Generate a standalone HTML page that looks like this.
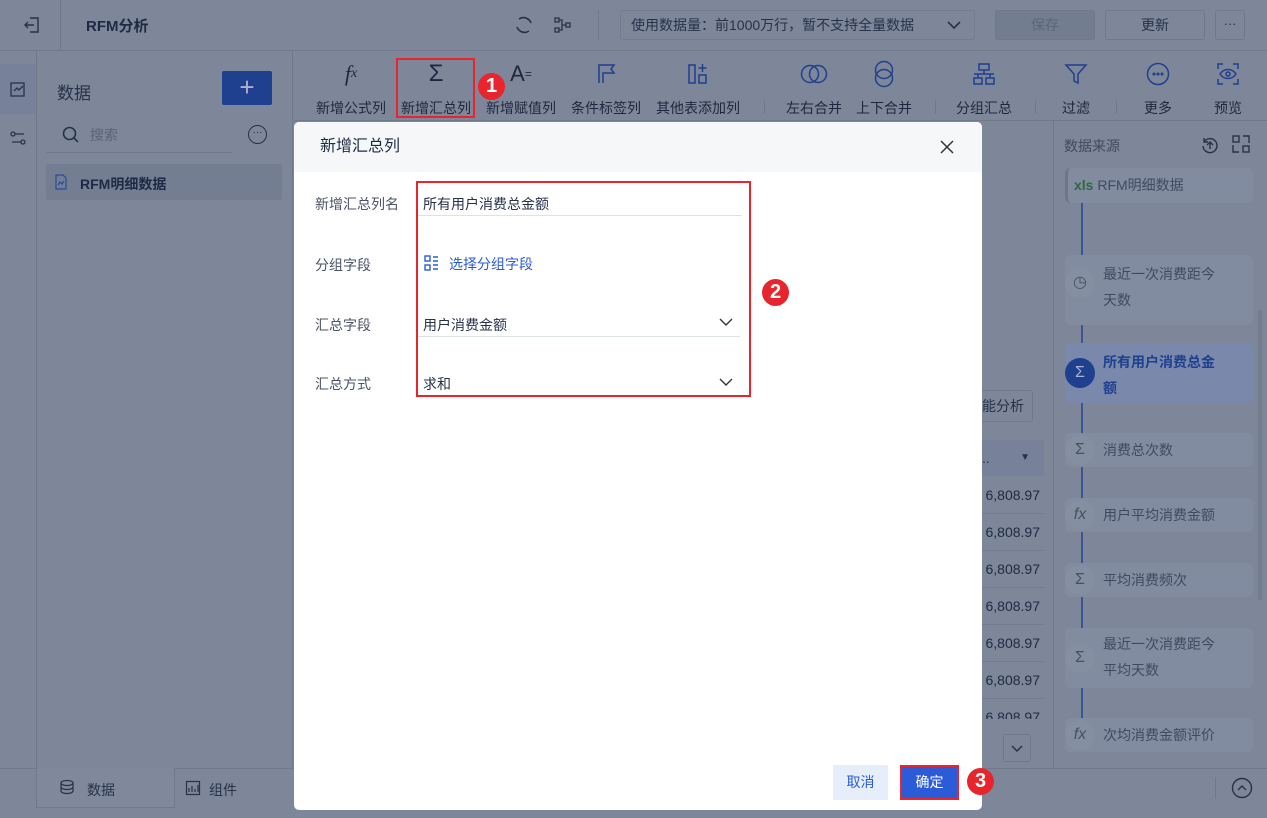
<!DOCTYPE html>
<html><head><meta charset="utf-8"><style>
*{box-sizing:border-box;margin:0;padding:0}
html,body{background:#7d8799}
body{width:1267px;height:818px;overflow:hidden;font-family:"Liberation Sans","Noto Sans CJK SC",sans-serif;position:relative;color:#1e2a44}
.a{position:absolute}
.t{font-size:14px;color:#26324a}
.ln{background:#6f798c}
.tb{position:absolute;top:60px;text-align:center;font-size:14px;color:#1d2840}
.ic{height:28px;margin-bottom:10px;display:flex;justify-content:center;align-items:center;color:#1f3f8f}
.card{position:absolute;left:1065px;width:188px;background:#828ca0;border-radius:6px;font-size:14px;color:#3f4a60}
.circ{position:absolute;left:1065px;width:30px;height:30px;border-radius:50%;background:#858fa2;text-align:center;line-height:30px;color:#465066;font-size:16px}
.row{position:absolute;left:982px;width:62px;height:37px;border-bottom:1px solid #737d90;font-size:14px;color:#1e2a44;line-height:37px;text-align:right;padding-right:4px}
.red{position:absolute;width:27px;height:27px;border-radius:50%;background:#e8242c;color:#fff;font-size:20px;font-weight:bold;text-align:center;line-height:27px}
</style></head><body>
<div class="a ln" style="left:0;top:50px;width:1267px;height:1px"></div>
<div class="a ln" style="left:60px;top:0;width:1px;height:50px"></div>
<svg class="a" style="left:22px;top:15px" width="20" height="20" viewBox="0 0 20 20" fill="none" stroke="#26324a" stroke-width="1.4"><path d="M8 3h8v14H8M3 10h9M6 7l-3 3 3 3"/></svg>
<div class="a" style="left:86px;top:15px;font-size:15px;font-weight:bold;color:#1e2a44">RFM分析</div>
<svg class="a" style="left:513px;top:14px" width="22" height="22" viewBox="0 0 22 22" fill="none" stroke="#26324a" stroke-width="1.6"><path d="M6 5a8 8 0 0 1 12 4M16 17A8 8 0 0 1 4 13"/></svg>
<svg class="a" style="left:553px;top:15px" width="20" height="20" viewBox="0 0 20 20" fill="none" stroke="#26324a" stroke-width="1.3"><rect x="2" y="3" width="4" height="4"/><rect x="2" y="13" width="4" height="4"/><rect x="13" y="8" width="4" height="4"/><path d="M6 5h3v10H6M9 10h4"/></svg>
<div class="a ln" style="left:598px;top:10px;width:1px;height:30px"></div>
<div class="a" style="left:620px;top:10px;width:355px;height:30px;border:1px solid #737d90;border-radius:3px;font-size:14px;line-height:28px;padding-left:10px;color:#26324a">使用数据量：前1000万行，暂不支持全量数据
<svg style="position:absolute;right:12px;top:9px" width="16" height="10" viewBox="0 0 16 10" fill="none" stroke="#26324a" stroke-width="1.6"><path d="M2 2l6 6 6-6"/></svg></div>
<div class="a" style="left:995px;top:10px;width:100px;height:30px;background:#737d90;border:1px solid #6f798c;border-radius:3px;font-size:14px;text-align:center;line-height:28px;color:#5c667a">保存</div>
<div class="a" style="left:1105px;top:10px;width:100px;height:30px;border:1px solid #6f798c;border-radius:3px;font-size:14px;text-align:center;line-height:28px;color:#26324a">更新</div>
<div class="a" style="left:1215px;top:10px;width:30px;height:30px;border:1px solid #6f798c;border-radius:3px;font-size:13px;text-align:center;line-height:26px;color:#26324a">···</div>
<!-- left -->
<div class="a ln" style="left:36px;top:51px;width:1px;height:717px"></div>
<div class="a ln" style="left:292px;top:51px;width:1px;height:717px"></div>
<div class="a" style="left:0;top:64px;width:36px;height:50px;background:#77819a"></div>
<svg class="a" style="left:8px;top:79px" width="20" height="20" viewBox="0 0 20 20" fill="none" stroke="#26324a" stroke-width="1.3"><rect x="3" y="4" width="13" height="13"/><path d="M6 12l3-3 2 2 4-4"/></svg>
<svg class="a" style="left:8px;top:128px" width="20" height="20" viewBox="0 0 20 20" fill="none" stroke="#26324a" stroke-width="1.3"><circle cx="5" cy="6" r="2"/><circle cx="15" cy="14" r="2"/><path d="M7 6h9M4 14h9"/></svg>
<div class="a" style="left:57px;top:79px;font-size:17px;color:#26324a">数据</div>
<div class="a" style="left:222px;top:71px;width:50px;height:34px;background:#1f3f8f;border-radius:2px;color:#a9b4d0;font-size:26px;text-align:center;line-height:32px">+</div>
<svg class="a" style="left:61px;top:125px" width="20" height="20" viewBox="0 0 20 20" fill="none" stroke="#26324a" stroke-width="1.6"><circle cx="8.5" cy="8.5" r="6"/><path d="M13 13l4 4"/></svg>
<div class="a" style="left:90px;top:125px;font-size:14px;color:#5a647a">搜索</div>
<div class="a ln" style="left:46px;top:152px;width:186px;height:1px"></div>
<div class="a" style="left:248px;top:125px;width:19px;height:19px;border:1.4px solid #26324a;border-radius:50%;font-size:10px;text-align:center;line-height:13px">···</div>
<div class="a" style="left:46px;top:164px;width:236px;height:36px;background:#737e93;border-radius:2px"></div>
<svg class="a" style="left:53px;top:174px" width="16" height="16" viewBox="0 0 16 16" fill="none" stroke="#2c4a9a" stroke-width="1.2"><path d="M3 1h7l3 3v11H3z M5 11l2-3 2 2 2-3"/></svg>
<div class="a" style="left:80px;top:174px;font-size:14px;font-weight:bold;color:#1e2a44">RFM明细数据</div>
<!-- toolbar -->
<div class="a ln" style="left:294px;top:120px;width:973px;height:1px"></div>
<div class="tb" style="left:311px;width:80px"><div class="ic" style="font-size:22px;font-style:italic;font-family:'Liberation Serif',serif;color:#1d2840">f<span style="font-size:14px">x</span></div>新增公式列</div>
<div class="tb" style="left:397px;width:78px"><div class="ic" style="font-size:24px;color:#1d2840">Σ</div>新增汇总列</div>
<div class="tb" style="left:481px;width:80px"><div class="ic" style="font-size:22px;color:#1d2840">A<span style="font-size:12px">=</span></div>新增赋值列</div>
<div class="tb" style="left:566px;width:80px"><div class="ic"><svg width="24" height="26" viewBox="0 0 24 26" fill="none" stroke="#1f3f8f" stroke-width="1.5"><path d="M5 22V4h15l-3 4 3 4H9v10"/></svg></div>条件标签列</div>
<div class="tb" style="left:652px;width:92px"><div class="ic"><svg width="26" height="26" viewBox="0 0 26 26" fill="none" stroke="#1f3f8f" stroke-width="1.5"><rect x="4" y="4" width="6" height="18"/><rect x="14" y="14" width="7" height="8"/><path d="M17.5 3v8M13.5 7h8"/></svg></div>其他表添加列</div>
<div class="a ln" style="left:764px;top:100px;width:1px;height:14px"></div>
<div class="tb" style="left:782px;width:64px"><div class="ic"><svg width="28" height="26" viewBox="0 0 28 26" fill="none" stroke="#1f3f8f" stroke-width="1.5"><circle cx="10" cy="13" r="8.5"/><circle cx="18" cy="13" r="8.5"/></svg></div>左右合并</div>
<div class="tb" style="left:852px;width:64px"><div class="ic"><svg width="26" height="28" viewBox="0 0 26 28" fill="none" stroke="#1f3f8f" stroke-width="1.5"><circle cx="13" cy="10" r="8.5"/><circle cx="13" cy="18" r="8.5"/></svg></div>上下合并</div>
<div class="a ln" style="left:935px;top:100px;width:1px;height:14px"></div>
<div class="tb" style="left:952px;width:64px"><div class="ic"><svg width="26" height="26" viewBox="0 0 26 26" fill="none" stroke="#1f3f8f" stroke-width="1.5"><rect x="8" y="3" width="10" height="6"/><rect x="3" y="17" width="8" height="6"/><rect x="15" y="17" width="8" height="6"/><path d="M13 9v4M3 13h20M7 13v4M19 13v4"/></svg></div>分组汇总</div>
<div class="a ln" style="left:1035px;top:100px;width:1px;height:14px"></div>
<div class="tb" style="left:1054px;width:44px"><div class="ic"><svg width="26" height="26" viewBox="0 0 26 26" fill="none" stroke="#1f3f8f" stroke-width="1.5"><path d="M3 4h20l-8 9v9l-4-2v-7z"/></svg></div>过滤</div>
<div class="a ln" style="left:1116px;top:100px;width:1px;height:14px"></div>
<div class="tb" style="left:1136px;width:44px"><div class="ic"><svg width="26" height="26" viewBox="0 0 26 26" fill="none" stroke="#1f3f8f" stroke-width="1.5"><circle cx="13" cy="13" r="10.5"/><circle cx="9" cy="13" r=".8"/><circle cx="13" cy="13" r=".8"/><circle cx="17" cy="13" r=".8"/></svg></div>更多</div>
<div class="tb" style="left:1206px;width:44px"><div class="ic"><svg width="26" height="26" viewBox="0 0 26 26" fill="none" stroke="#1f3f8f" stroke-width="1.5"><path d="M3 8V3h5M18 3h5v5M23 18v5h-5M8 23H3v-5M5 13c4-6 12-6 16 0-4 6-12 6-16 0z"/><circle cx="13" cy="13" r="2"/></svg></div>预览</div>
<div class="a" style="left:396px;top:58px;width:79px;height:60px;border:2px solid #e8242c"></div>
<div class="red" style="left:478px;top:73px">1</div>
<!-- right panel -->
<div class="a ln" style="left:1053px;top:121px;width:1px;height:647px"></div>
<div class="a" style="left:1064px;top:136px;font-size:14px;color:#3f4a60">数据来源</div>
<svg class="a" style="left:1200px;top:135px" width="20" height="20" viewBox="0 0 20 20" fill="none" stroke="#26324a" stroke-width="1.4"><path d="M4 7a7 7 0 1 1-1 4M4 3v4h4M10 14V7M7 10l3-3 3 3"/></svg>
<svg class="a" style="left:1232px;top:135px" width="18" height="18" viewBox="0 0 18 18" fill="none" stroke="#26324a" stroke-width="1.4"><rect x="1" y="1" width="6" height="6"/><rect x="11" y="11" width="6" height="6"/><path d="M1 10v7h6M17 8V1h-6"/></svg>
<div class="a" style="left:1081px;top:203px;width:1.5px;height:540px;background:#1f3f8f;opacity:.7"></div>
<div class="card" style="top:168px;height:35px;line-height:35px;padding-left:6px;border-left:3px solid #6d778a"><b style="color:#2e6a3c">xls</b> RFM明细数据</div>
<div class="card" style="top:255px;height:70px;padding:6px 0 0 38px;line-height:26px">最近一次消费距今<br>天数</div>
<div class="circ" style="top:268px">◷</div>
<div class="card" style="top:343px;height:60px;padding:6px 0 0 38px;line-height:26px;background:#7a89ab;color:#1f3f8f;font-weight:bold">所有用户消费总金<br>额</div>
<div class="circ" style="top:358px;background:#1f3f8f;color:#a9b4d0">Σ</div>
<div class="card" style="top:433px;height:34px;line-height:34px;padding-left:38px">消费总次数</div><div class="circ" style="top:435px">Σ</div>
<div class="card" style="top:498px;height:34px;line-height:34px;padding-left:38px">用户平均消费金额</div><div class="circ" style="top:500px;font-style:italic">fx</div>
<div class="card" style="top:563px;height:34px;line-height:34px;padding-left:38px">平均消费频次</div><div class="circ" style="top:565px">Σ</div>
<div class="card" style="top:628px;height:60px;padding:3px 0 0 38px;line-height:26px">最近一次消费距今<br>平均天数</div><div class="circ" style="top:643px">Σ</div>
<div class="card" style="top:718px;height:34px;line-height:34px;padding-left:38px">次均消费金额评价</div><div class="circ" style="top:720px;font-style:italic">fx</div>
<div class="a" style="left:1258px;top:310px;width:4px;height:290px;background:#737d90;border-radius:2px"></div>
<!-- table fragment -->
<div class="a" style="left:975px;top:390px;width:58px;height:32px;border:1px solid #6f798c;border-radius:3px;font-size:14px;line-height:30px;padding-left:6px;color:#26324a">能分析</div>
<div class="a" style="left:982px;top:440px;width:62px;height:36px;background:#77819a;font-size:14px;line-height:36px;color:#26324a">.. <span style="position:absolute;right:14px;font-size:10px">▼</span></div>
<div class="row" style="top:477px">6,808.97</div>
<div class="row" style="top:514px">6,808.97</div>
<div class="row" style="top:551px">6,808.97</div>
<div class="row" style="top:588px">6,808.97</div>
<div class="row" style="top:625px">6,808.97</div>
<div class="row" style="top:662px">6,808.97</div>
<div class="row" style="top:699px;height:20px;line-height:36px;overflow:hidden;border:none">6,808.97</div>
<div class="a" style="left:1003px;top:734px;width:28px;height:28px;border:1px solid #6f798c;border-radius:3px"><svg style="position:absolute;left:6px;top:9px" width="14" height="9" viewBox="0 0 14 9" fill="none" stroke="#26324a" stroke-width="1.5"><path d="M2 2l5 5 5-5"/></svg></div>
<!-- bottom bar -->
<div class="a ln" style="left:0;top:768px;width:1267px;height:1px"></div>
<div class="a" style="left:36px;top:768px;width:139px;height:40px;background:#7f899b;border:1px solid #6f798c;border-top:none"></div>
<svg class="a" style="left:59px;top:779px" width="16" height="16" viewBox="0 0 16 16" fill="none" stroke="#26324a" stroke-width="1.2"><ellipse cx="8" cy="4" rx="6" ry="2.5"/><path d="M2 4v8c0 1.4 2.7 2.5 6 2.5s6-1.1 6-2.5V4M2 8c0 1.4 2.7 2.5 6 2.5S14 9.4 14 8"/></svg>
<div class="a" style="left:87px;top:780px;font-size:14px;color:#26324a">数据</div>
<svg class="a" style="left:185px;top:780px" width="16" height="16" viewBox="0 0 16 16" fill="none" stroke="#26324a" stroke-width="1.2"><rect x="1.5" y="1.5" width="13" height="13"/><path d="M4 12V8M7 12V6M10 12V9M13 12V5"/></svg>
<div class="a" style="left:209px;top:780px;font-size:14px;color:#26324a">组件</div>
<div class="a ln" style="left:1215px;top:777px;width:1px;height:22px"></div>
<svg class="a" style="left:1231px;top:777px" width="22" height="22" viewBox="0 0 22 22" fill="none" stroke="#26324a" stroke-width="1.4"><circle cx="11" cy="11" r="9.5"/><path d="M7 13l4-4 4 4"/></svg>
<!-- dialog -->
<div class="a" style="left:294px;top:122px;width:688px;height:688px;background:#fff;border-radius:5px;overflow:hidden">
 <div style="height:50px;background:#f6f7f9;font-size:16px;line-height:50px;padding-left:26px;color:#1e2a44">新增汇总列</div>
 <svg class="a" style="left:646px;top:18px" width="14" height="14" viewBox="0 0 14 14" stroke="#333" stroke-width="1.5"><path d="M1 1l12 12M13 1L1 13"/></svg>
 <div class="a t" style="left:21px;top:72px;color:#4a5366">新增汇总列名</div>
 <div class="a t" style="left:129px;top:72px">所有用户消费总金额</div>
 <div class="a" style="left:123px;top:93px;width:325px;height:1px;background:#dde1e8"></div>
 <div class="a t" style="left:21px;top:133px;color:#4a5366">分组字段</div>
 <svg class="a" style="left:130px;top:133px" width="16" height="16" viewBox="0 0 16 16" fill="none" stroke="#2b5bd7" stroke-width="1.4"><rect x="1" y="1" width="5" height="5"/><rect x="1" y="10" width="5" height="5"/><path d="M9 2h5M9 6h5M9 10h5M9 14h5"/></svg>
 <div class="a t" style="left:155px;top:132px;color:#2b5bd7">选择分组字段</div>
 <div class="a t" style="left:21px;top:193px;color:#4a5366">汇总字段</div>
 <div class="a t" style="left:129px;top:193px">用户消费金额</div>
 <svg class="a" style="left:424px;top:195px" width="16" height="10" viewBox="0 0 16 10" fill="none" stroke="#333" stroke-width="1.4"><path d="M2 2l6 6 6-6"/></svg>
 <div class="a" style="left:123px;top:214px;width:323px;height:1px;background:#dde1e8"></div>
 <div class="a t" style="left:21px;top:252px;color:#4a5366">汇总方式</div>
 <div class="a t" style="left:129px;top:252px">求和</div>
 <svg class="a" style="left:424px;top:255px" width="16" height="10" viewBox="0 0 16 10" fill="none" stroke="#333" stroke-width="1.4"><path d="M2 2l6 6 6-6"/></svg>
 <div class="a" style="left:122px;top:59px;width:335px;height:216px;border:2px solid #e8242c"></div>
 <div class="red" style="left:468px;top:157px">2</div>
 <div class="a" style="left:539px;top:643px;width:55px;height:35px;background:#e6eefc;color:#2b5bd7;font-size:14px;text-align:center;line-height:35px">取消</div>
 <div class="a" style="left:606px;top:643px;width:59px;height:35px;background:#2b5bd7;border:2px solid #e8242c;color:#fff;font-size:14px;text-align:center;line-height:31px">确定</div>
</div>
<div class="red" style="left:967px;top:768px">3</div>
</body></html>
